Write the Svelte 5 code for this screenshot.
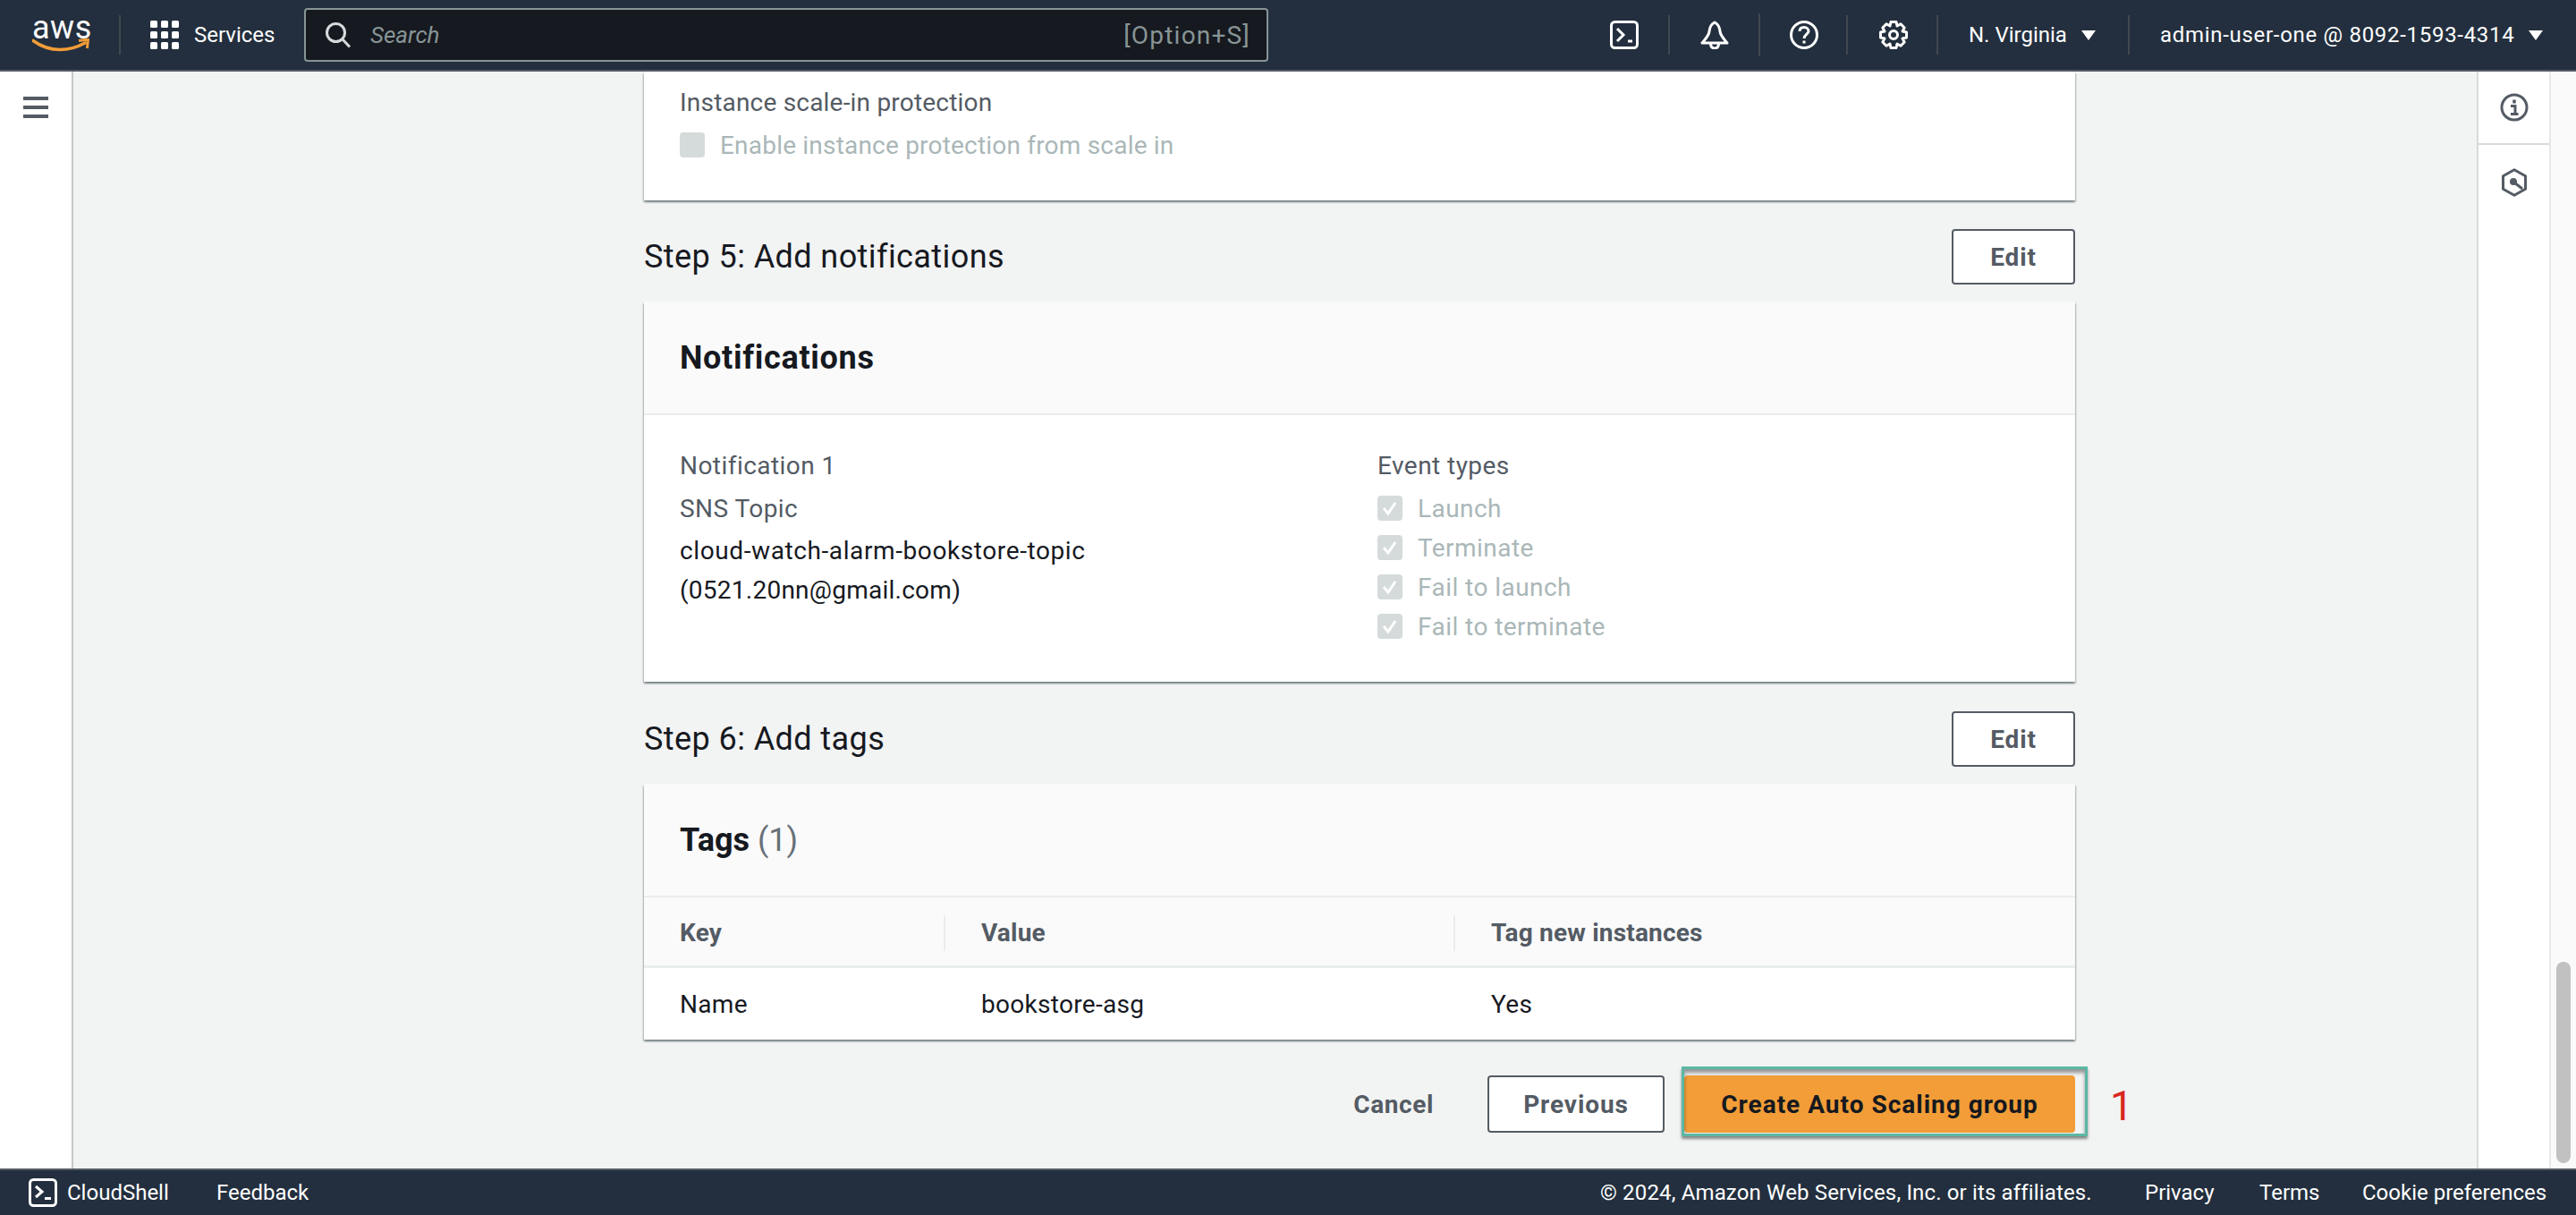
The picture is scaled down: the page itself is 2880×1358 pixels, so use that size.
<script>
  const events = ['Launch', 'Terminate', 'Fail to launch', 'Fail to terminate'];
</script>

<div class="shell">
  <header class="topbar">
    <div class="logo">
      <span class="logo-text">aws</span>
      <svg class="smile" width="64" height="16" viewBox="0 0 64 16" fill="none">
        <path d="M1 2.5C10 9 20 12.5 31 12.5C41 12.5 51 9.5 59 5" stroke="#f29d38" stroke-width="3.6" stroke-linecap="round"/>
        <path d="M52 2.4L62.5 1L61.4 11" stroke="#f29d38" stroke-width="3" fill="none" stroke-linejoin="round"/>
      </svg>
    </div>
    <span class="sep sep-logo"></span>
    <svg class="grid-icon" width="32" height="32" viewBox="0 0 32 32" fill="#fff">
      {#each [0, 12, 24] as y}
        {#each [0, 12, 24] as x}
          <rect x={x} y={y} width="8" height="8" rx="1.5" />
        {/each}
      {/each}
    </svg>
    <span class="services">Services</span>
    <div class="search">
      <svg width="30" height="30" viewBox="0 0 30 30" fill="none" stroke="#d5dbdb" stroke-width="3">
        <circle cx="12.5" cy="12.5" r="10" />
        <path d="M20 20L28 28.5" />
      </svg>
      <span class="search-text">Search</span>
      <span class="search-key">[Option+S]</span>
    </div>
    <svg class="ti ti-shell" width="32" height="32" viewBox="0 0 32 32" fill="none" stroke="#fff" stroke-width="3">
      <rect x="1.5" y="1.5" width="29" height="29" rx="4" />
      <path d="M8 9L15 16L8 23" />
      <path d="M20 23H25" />
    </svg>
    <span class="sep sep-shell"></span>
    <svg class="ti ti-bell" width="32" height="32" viewBox="0 0 32 32" fill="none" stroke="#fff" stroke-width="3">
      <path d="M16 2C12 4 10.500 7 10 12C9.500 17 6 20 2 25H30C26 20 22.500 17 22 12C21.500 7 20 4 16 2Z" stroke-linejoin="round" />
      <path d="M11.500 25C11.500 29 13.500 31 16 31C18.500 31 20.500 29 20.500 25" />
    </svg>
    <span class="sep sep-bell"></span>
    <svg class="ti ti-help" width="32" height="32" viewBox="0 0 32 32" fill="none" stroke="#fff" stroke-width="3">
      <circle cx="16" cy="16" r="14.500" />
      <path d="M11 12C11 9 13 7.500 16 7.500C19 7.500 21 9.500 21 12C21 15 16 15.500 16 20" />
      <path d="M16 22.500V25.500" />
    </svg>
    <span class="sep sep-help"></span>
    <svg class="ti ti-gear" width="32" height="32" viewBox="0 0 32 32" fill="none" stroke="#fff" stroke-width="3" stroke-linejoin="round">
      <path d="M13 1.500H19L20 6L24 3.800L28.200 8L26 12L30.500 13V19L26 20L28.200 24L24 28.200L20 26L19 30.500H13L12 26L8 28.200L3.800 24L6 20L1.500 19V13L6 12L3.800 8L8 3.800L12 6Z" />
      <circle cx="16" cy="16" r="4.500" />
    </svg>
    <span class="sep sep-gear"></span>
    <span class="nav-text region">N. Virginia</span>
    <span class="caret"></span>
    <span class="sep sep-region"></span>
    <span class="nav-text account">admin-user-one @ 8092-1593-4314</span>
    <span class="caret"></span>
  </header>

  <div class="body">
    <aside class="leftnav">
      <svg width="28" height="24" viewBox="0 0 28 24" fill="#545b64">
        <rect y="0" width="28" height="4" />
        <rect y="10" width="28" height="4" />
        <rect y="20" width="28" height="4" />
      </svg>
    </aside>

    <main class="content">
      <div class="column">
        <section class="card card-top">
          <div class="label">Instance scale-in protection</div>
          <div class="check-row disabled first-check">
            <span class="box"></span>
            <span>Enable instance protection from scale in</span>
          </div>
        </section>

        <div class="step-row">
          <h2>Step 5: Add notifications</h2>
          <button class="btn">Edit</button>
        </div>
        <section class="card card-notify">
          <div class="card-head"><h3>Notifications</h3></div>
          <div class="notify-body">
            <div class="notify-left">
              <div class="label line">Notification 1</div>
              <div class="label line">SNS Topic</div>
              <div class="value line-topic">cloud-watch-alarm-bookstore-topic</div>
              <div class="value line-mail">(0521.20nn@gmail.com)</div>
            </div>
            <div class="notify-right">
              <div class="label line">Event types</div>
              {#each events as ev}
                <div class="check-row disabled">
                  <span class="box">
                    <svg width="28" height="28" viewBox="0 0 28 28" fill="none" stroke="#fff" stroke-width="3">
                      <path d="M7 14L12 20L20 8" />
                    </svg>
                  </span>
                  <span>{ev}</span>
                </div>
              {/each}
            </div>
          </div>
        </section>

        <div class="step-row step-tags">
          <h2>Step 6: Add tags</h2>
          <button class="btn">Edit</button>
        </div>
        <section class="card card-tags">
          <div class="card-head"><h3 class="tags-title">Tags <span class="count">(1)</span></h3></div>
          <div class="tag-grid tag-head">
            <div class="th">Key</div>
            <div class="th has-rule">Value</div>
            <div class="th has-rule">Tag new instances</div>
          </div>
          <div class="tag-grid tag-row">
            <div>Name</div>
            <div>bookstore-asg</div>
            <div>Yes</div>
          </div>
        </section>

        <div class="actions">
          <button class="link">Cancel</button>
          <button class="btn btn-prev">Previous</button>
          <div class="primary-wrap">
            <button class="btn-primary">Create Auto Scaling group</button>
            <span class="annot-box"></span>
            <span class="annot-num">1</span>
          </div>
        </div>
      </div>
    </main>

    <aside class="rightpanel">
      <div class="panel-cell">
        <svg width="32" height="32" viewBox="0 0 32 32" fill="none" stroke="#545b64" stroke-width="3">
          <circle cx="16" cy="16" r="14" />
          <path d="M16 7.500V11.500" stroke-width="3.500" />
          <path d="M12 14.500H17V23M12 23.500H20.500" />
        </svg>
      </div>
      <div class="panel-cell cell-hex">
        <svg width="30" height="32" viewBox="0 0 30 32" fill="none" stroke="#545b64" stroke-width="3" stroke-linejoin="round">
          <path d="M15 1.800L27.500 8.800V23.200L15 30.200L2.500 23.200V8.800Z" />
          <circle cx="14" cy="15" r="4" fill="#545b64" stroke="none" />
          <path d="M15 16L24 23" />
        </svg>
      </div>
    </aside>

    <div class="scrolltrack"><span class="thumb"></span></div>
  </div>

  <footer class="footer">
    <svg width="32" height="32" viewBox="0 0 32 32" fill="none" stroke="#fff" stroke-width="3">
      <rect x="1.500" y="1.500" width="29" height="29" rx="4" />
      <path d="M8 9L15 15L8 21" />
      <path d="M18 22.500H25" />
    </svg>
    <span class="f-shell">CloudShell</span>
    <span class="f-feedback">Feedback</span>
    <span class="f-copy">© 2024, Amazon Web Services, Inc. or its affiliates.</span>
    <span class="f-privacy">Privacy</span>
    <span class="f-terms">Terms</span>
    <span class="f-cookie">Cookie preferences</span>
  </footer>
</div>

<style>
  :global(body) {
    margin: 0;
    background: #f2f3f3;
  }

  .shell {
    display: flex;
    flex-direction: column;
    height: 100vh;
    overflow: hidden;
    font-family: Roboto, "Liberation Sans", sans-serif;
    font-size: 28px;
    color: #16191f;
  }

  /* top bar */
  .topbar {
    flex: 0 0 80px;
    box-sizing: border-box;
    display: flex;
    align-items: center;
    background: #232f3e;
    border-bottom: 2px solid #545b64;
    color: #fff;
  }
  .logo {
    position: relative;
    width: 64px;
    height: 40px;
    margin-left: 36px;
  }
  .logo-text {
    position: absolute;
    left: 0;
    top: -8px;
    font-size: 36px;
    line-height: 40px;
    letter-spacing: 0.5px;
  }
  .smile {
    position: absolute;
    left: 0;
    bottom: 0;
  }
  .sep {
    flex: none;
    width: 2px;
    height: 44px;
    background: #414750;
  }
  .sep-logo { margin-left: 33px; }
  .grid-icon { margin-left: 33px; flex: none; }
  .services {
    margin-left: 17px;
    font-size: 24px;
    width: 88px;
    white-space: nowrap;
  }
  .search {
    box-sizing: border-box;
    display: flex;
    align-items: center;
    width: 1078px;
    height: 60px;
    margin-left: 35px;
    padding: 0 18px 0 21px;
    background: #16191f;
    border: 2px solid #879596;
    border-radius: 4px;
  }
  .search-text {
    margin-left: 21px;
    font-size: 26px;
    font-style: italic;
    color: #879596;
  }
  .search-key {
    margin-left: auto;
    font-size: 28px;
    letter-spacing: 1.2px;
    color: #879596;
  }
  .ti { flex: none; }
  .ti-shell { margin-left: 382px; }
  .sep-shell { margin-left: 33px; }
  .ti-bell { margin-left: 34px; }
  .sep-bell { margin-left: 33px; height: 48px; }
  .ti-help { margin-left: 33px; }
  .sep-help { margin-left: 31px; }
  .ti-gear { margin-left: 35px; }
  .sep-gear { margin-left: 32px; }
  .nav-text {
    font-size: 24px;
    white-space: nowrap;
  }
  .region { margin-left: 34px; width: 112px; }
  .caret {
    flex: none;
    margin-left: 14px;
    width: 0;
    height: 0;
    border-left: 8px solid transparent;
    border-right: 8px solid transparent;
    border-top: 11px solid #fff;
  }
  .sep-region { margin-left: 36px; }
  .account { margin-left: 34px; width: 399px; letter-spacing: 0.7px; }
  .account + .caret { margin-left: 13px; }

  /* body */
  .body {
    flex: 1;
    display: flex;
    min-height: 0;
  }
  .leftnav {
    flex: 0 0 82px;
    box-sizing: border-box;
    background: #fff;
    border-right: 2px solid #c4c8c8;
    padding: 28px 0 0 26px;
  }
  .leftnav svg { display: block; }
  .content {
    flex: 1;
    min-width: 0;
    padding-left: 638px;
  }
  .column {
    width: 1600px;
  }
  .card {
    background: #fff;
    box-shadow: 0 2px 2px 0 rgba(0, 28, 36, 0.45), 2px 2px 2px -1px rgba(0, 28, 36, 0.15), -2px 2px 2px -1px rgba(0, 28, 36, 0.15);
  }
  .card-top {
    height: 144px;
    box-sizing: border-box;
    padding: 17px 40px 0;
    letter-spacing: 0.2px;
  }
  .label {
    color: #545b64;
    line-height: 36px;
  }
  .check-row {
    display: flex;
    align-items: center;
    gap: 17px;
    height: 44px;
  }
  .first-check { margin-top: 7px; }
  .disabled { color: #aab7b8; }
  .box {
    flex: none;
    width: 28px;
    height: 28px;
    border-radius: 4px;
    background: #d5dbdb;
  }
  .box svg { display: block; }

  .step-row {
    display: flex;
    align-items: center;
    justify-content: space-between;
    height: 64px;
    margin: 31px 0 18px;
  }
  .step-tags { margin-top: 32px; }
  h2 {
    margin: 0;
    font-size: 36px;
    font-weight: 400;
    line-height: 44px;
    letter-spacing: 0.42px;
  }
  .btn {
    box-sizing: border-box;
    height: 62px;
    width: 138px;
    padding: 0;
    background: #fff;
    border: 2px solid #545b64;
    border-radius: 4px;
    font: 700 28px Roboto, "Liberation Sans", sans-serif;
    letter-spacing: 0.9px;
    color: #545b64;
  }

  .card-head {
    box-sizing: border-box;
    display: flex;
    align-items: center;
    height: 127px;
    padding: 0 40px;
    background: #fafafa;
    border-bottom: 2px solid #eaeded;
  }
  h3 {
    margin: 0;
    font-size: 36px;
    font-weight: 700;
    line-height: 44px;
    letter-spacing: 0.7px;
  }
  .tags-title { letter-spacing: 0; }
  .count {
    font-weight: 400;
    color: #687078;
  }

  .card-notify { height: 425px; }
  .notify-body {
    display: flex;
    padding: 39px 40px 0;
    letter-spacing: 0.45px;
  }
  .notify-left { width: 780px; }
  .line { height: 48px; line-height: 36px; }
  .notify-right .line { height: 43px; }
  .value { color: #16191f; line-height: 36px; }
  .line-topic { margin-top: -1px; height: 44px; letter-spacing: 0.6px; }
  .line-mail { letter-spacing: 0.25px; }

  .card-tags { height: 286px; }
  .tag-grid {
    display: grid;
    grid-template-columns: 337px 570px 1fr;
    padding-left: 40px;
  }
  .tag-head {
    box-sizing: border-box;
    height: 79px;
    padding-top: 3px;
    align-items: center;
    background: #fafafa;
    border-bottom: 3px solid #eaeded;
  }
  .th {
    font-weight: 700;
    color: #545b64;
    font-size: 28px;
    line-height: 40px;
    letter-spacing: 0.2px;
  }
  .has-rule {
    border-left: 2px solid #eaeded;
    padding-left: 40px;
    margin-left: -42px;
  }
  .tag-row {
    height: 80px;
    align-items: center;
    letter-spacing: 0.3px;
  }

  .actions {
    display: flex;
    align-items: center;
    justify-content: flex-end;
    height: 64px;
    margin-top: 40px;
  }
  .link {
    padding: 0;
    margin-right: 60px;
    background: none;
    border: 0;
    font: 700 28px Roboto, "Liberation Sans", sans-serif;
    letter-spacing: 0.6px;
    color: #545b64;
  }
  .btn-prev {
    width: 198px;
    height: 64px;
    margin-right: 22px;
  }
  .primary-wrap {
    position: relative;
    width: 437px;
    height: 64px;
  }
  .btn-primary {
    display: block;
    width: 100%;
    height: 100%;
    padding: 0;
    background: #f29d38;
    border: 0;
    border-radius: 4px;
    font: 700 28px Roboto, "Liberation Sans", sans-serif;
    letter-spacing: 1px;
    color: #16191f;
  }
  .annot-box {
    position: absolute;
    left: -3px;
    top: -10px;
    width: 448px;
    height: 72px;
    border: 3px solid #5bb8a4;
    box-shadow: 0 3px 3px rgba(0, 0, 0, 0.45), inset 0 4px 4px rgba(0, 0, 0, 0.4);
    pointer-events: none;
  }
  .annot-num {
    position: absolute;
    left: 476px;
    top: 8px;
    font-size: 46px;
    line-height: 52px;
    color: #d8281f;
  }

  /* right side */
  .rightpanel {
    flex: 0 0 81px;
    box-sizing: border-box;
    background: #fff;
    border-left: 2px solid #d5dbdb;
  }
  .panel-cell {
    box-sizing: border-box;
    display: flex;
    justify-content: center;
    height: 82px;
    padding-top: 24px;
    border-bottom: 2px solid #d5dbdb;
  }
  .cell-hex {
    border-bottom: 0;
    padding-top: 26px;
  }
  .panel-cell svg { display: block; }
  .scrolltrack {
    flex: 0 0 30px;
    box-sizing: border-box;
    position: relative;
    background: #fafafa;
    border-left: 2px solid #e8e8e8;
  }
  .thumb {
    position: absolute;
    left: 6px;
    top: 995px;
    width: 16px;
    height: 225px;
    border-radius: 8px;
    background: #c1c1c1;
  }

  /* footer */
  .footer {
    flex: 0 0 52px;
    box-sizing: border-box;
    display: flex;
    align-items: center;
    padding-left: 32px;
    background: #232f3e;
    border-top: 2px solid #545b64;
    color: #fff;
    font-size: 24px;
    white-space: nowrap;
  }
  .footer svg { flex: none; }
  .f-shell { margin-left: 11px; width: 116px; }
  .f-feedback { margin-left: 51px; width: 101px; }
  .f-copy { margin-left: 1446px; width: 549px; letter-spacing: 0.15px; }
  .f-privacy { margin-left: 60px; width: 76px; }
  .f-terms { margin-left: 52px; width: 66px; }
  .f-cookie { margin-left: 49px; }
</style>
